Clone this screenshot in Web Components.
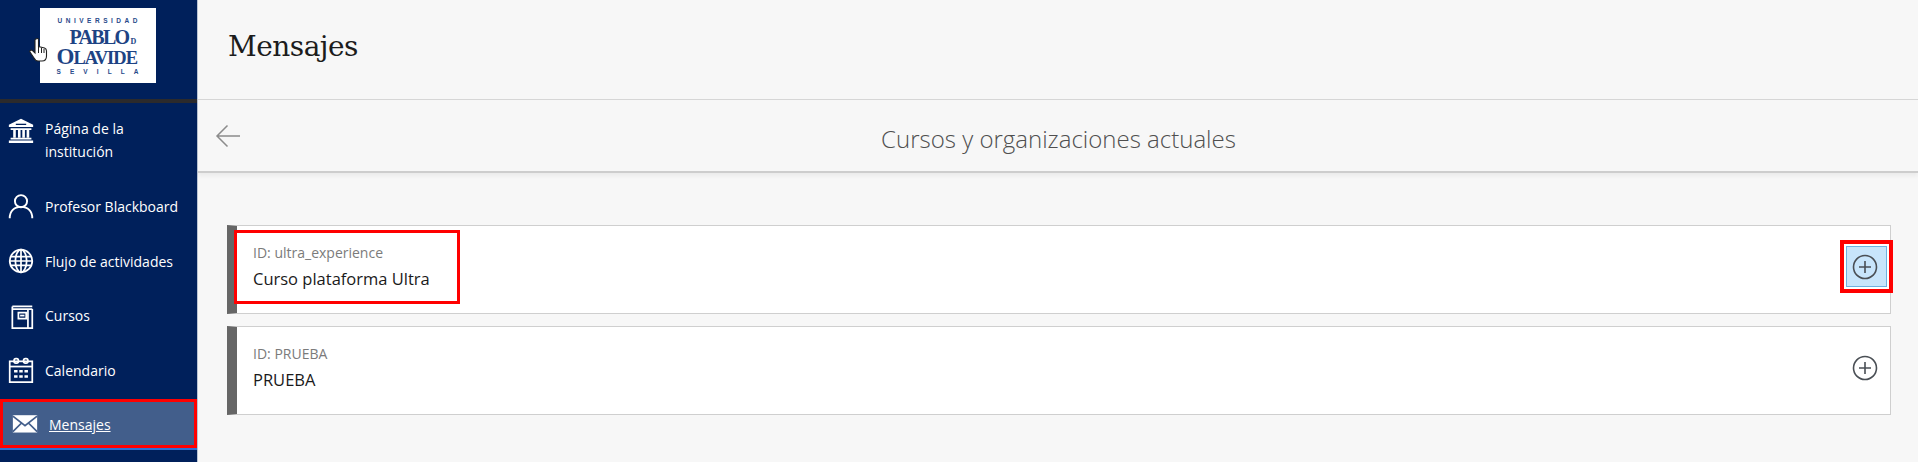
<!DOCTYPE html>
<html lang="es">
<head>
<meta charset="utf-8">
<title>Mensajes</title>
<style>
  html, body { margin: 0; height: 100%; background: #f7f7f7; overflow: hidden; }
  body { font-family: "Open Sans", sans-serif; }
  app-shell { width: 1918px; height: 462px; }
</style>
</head>
<body>
<app-shell>
  <side-nav slot="nav">
    <nav-item icon="bank">Página de la institución</nav-item>
    <nav-item icon="user">Profesor Blackboard</nav-item>
    <nav-item icon="globe">Flujo de actividades</nav-item>
    <nav-item icon="book">Cursos</nav-item>
    <nav-item icon="calendar">Calendario</nav-item>
    <nav-item icon="mail" active>Mensajes</nav-item>
  </side-nav>
  <page-header>Mensajes</page-header>
  <sub-header>Cursos y organizaciones actuales</sub-header>
  <course-list>
    <course-card course-id="ultra_experience" highlighted>Curso plataforma Ultra</course-card>
    <course-card course-id="PRUEBA">PRUEBA</course-card>
  </course-list>
</app-shell>

<script>
const NAV_ICONS = {
  bank: `<path d="M1 9 15 2l14 7v2.500H1z" fill="currentColor"/><path d="M3 13h24v2H3zM3 24h24v2H3zM1 27h28v3H1z" fill="currentColor"/><path d="M6 15h3v9H6zM11.500 15h3v9h-3zM16.500 15h3v9h-3zM21.500 15h3v9h-3z" fill="currentColor"/><path d="M9 8.500h12" stroke="#00205b" stroke-width="1.500"/>`,
  user: `<circle cx="15" cy="9.500" r="7" fill="none" stroke="currentColor" stroke-width="2.200"/><path d="M2 29c0-8 5-13 13-13s13 5 13 13" fill="none" stroke="currentColor" stroke-width="2.200"/>`,
  globe: `<g fill="none" stroke="currentColor" stroke-width="2"><circle cx="15" cy="15" r="13"/><ellipse cx="15" cy="15" rx="6.500" ry="13"/><path d="M15 2v26M3 10h24M2 15h26M3 20h24"/></g>`,
  book: `<g fill="none" stroke="currentColor" stroke-width="2"><path d="M5 4h23M5 4v25h18V7M5 7h23M28 7v22h-5"/><path d="M12 11h9v7h-9z"/></g><path d="M14 13.500h5v2h-5z" fill="currentColor"/>`,
  calendar: `<g fill="none" stroke="currentColor" stroke-width="2"><rect x="2" y="5" width="26" height="24"/><rect x="7" y="2" width="5" height="5" rx="2"/><rect x="18" y="2" width="5" height="5" rx="2"/><path d="M2 11h26"/></g><path d="M7 15h4v3H7zM13 15h4v3h-4zM19 15h4v3h-4zM7 21h4v3H7zM13 21h4v3h-4zM19 21h4v3h-4z" fill="currentColor"/>`,
  mail: `<rect x="1" y="6" width="28" height="20" fill="currentColor"/><path d="M1 7l14 11L29 7M1 25l10-10M29 25 19 15" fill="none" stroke="#425e8b" stroke-width="2"/>`
};

class AppShell extends HTMLElement {
  constructor() {
    super();
    this.attachShadow({ mode: "open" });
    this.shadowRoot.innerHTML = `
      <style>
        :host { display: flex; }
        .main { flex: 1; min-width: 0; display: flex; flex-direction: column; }
      </style>
      <slot name="nav"></slot>
      <div class="main"><slot></slot></div>`;
  }
}

class SideNav extends HTMLElement {
  constructor() {
    super();
    this.attachShadow({ mode: "open" });
    this.shadowRoot.innerHTML = `
      <style>
        :host {
          display: flex;
          flex-direction: column;
          width: 197px;
          height: 462px;
          background: #00205b;
          border-right: 1px solid #b9c4d4;
          position: relative;
        }
        .brand {
          flex: none;
          height: 91px;
          display: flex;
          justify-content: center;
          padding: 8px 2px 0 0;
          border-bottom: 4px solid #2b2a2c;
        }
        .logo {
          width: 116px;
          height: 75px;
          background: #fff;
          color: #1d4384;
          display: flex;
          flex-direction: column;
          align-items: center;
          font-family: "Liberation Serif", serif;
        }
        .spaced {
          font: 700 6.500px/7px "Liberation Sans", sans-serif;
          letter-spacing: 3.500px;
          margin-right: -3.500px;
          margin-top: 8.500px;
          color: #28498a;
        }
        .spaced.s { letter-spacing: 9.100px; margin-right: -9.100px; margin-top: 1.500px; }
        .words { font-weight: 700; margin-top: 4.500px; width: 82px; }
        .words div { height: 19px; line-height: 19px; white-space: nowrap; }
        .pablo { font-size: 20px; letter-spacing: -1.700px; padding-left: 13px; }
        .pablo small { font-size: 8px; letter-spacing: 0; margin-left: 2px; }
        .olavide { font-size: 18.500px; letter-spacing: -1px; }
        .olavide b { font-size: 23px; }
        .hand { position: absolute; left: 29px; top: 37px; }
        .items { display: flex; flex-direction: column; padding-top: 7px; }
      </style>
      <div class="brand">
        <div class="logo">
          <div class="spaced">UNIVERSIDAD</div>
          <div class="words">
            <div class="pablo">PABLO<small>D</small></div>
            <div class="olavide"><b>O</b>LAVIDE</div>
          </div>
          <div class="spaced s">SEVILLA</div>
        </div>
      </div>
      <svg class="hand" width="20" height="26" viewBox="0 0 20 26">
        <path d="M7 2c1-1 2.500-.5 2.500 1v6.500l6 1.500c1.500.5 2 1.500 2 3v5c0 3-1.500 5-4.500 5H9c-2 0-3-1-4-3L1 15c-.5-1.500 1-2.500 2.500-1.500L6 16V3c0-.5.500-1 1-1z" fill="#fff" stroke="#222" stroke-width="1.100"/>
        <path d="M9.500 10v6M12.500 11v5M15 12v4" stroke="#222" stroke-width="1"/>
      </svg>
      <div class="items"><slot></slot></div>`;
  }
}

class NavItem extends HTMLElement {
  constructor() {
    super();
    this.attachShadow({ mode: "open" });
  }

  connectedCallback() {
    const icon = NAV_ICONS[this.getAttribute("icon")] || "";
    this.shadowRoot.innerHTML = `
      <style>
        :host {
          display: flex;
          align-items: center;
          gap: 11px;
          box-sizing: border-box;
          min-height: 54.700px;
          padding: 0 8px 0 8px;
          color: #fff;
          font: 14px/23px "Open Sans", sans-serif;
        }
        :host([icon="bank"]) {
          align-items: flex-start;
          min-height: 69px;
          padding-top: 6.500px;
        }
        :host([active]) {
          min-height: 49px;
          margin-top: 1px;
          padding-left: 9px;
          background: #425e8b;
          border: 3px solid #f00;
          box-shadow: 0 2px 0 #2f6fd0;
          text-decoration: underline;
        }
        :host([active]) span { padding-top: 3px; }
        svg { flex: none; }
      </style>
      <svg width="26" height="26" viewBox="0 0 30 30">${icon}</svg>
      <span><slot></slot></span>`;
  }
}

class PageHeader extends HTMLElement {
  constructor() {
    super();
    this.attachShadow({ mode: "open" });
    this.shadowRoot.innerHTML = `
      <style>
        :host {
          display: flex;
          align-items: center;
          box-sizing: border-box;
          height: 100px;
          padding: 0 0 7px 30px;
          border-bottom: 1px solid #d6d6d6;
          color: #1c1c1c;
          font: 28px "DejaVu Serif", serif;
          letter-spacing: -0.500px;
        }
      </style>
      <slot></slot>`;
  }
}

class SubHeader extends HTMLElement {
  constructor() {
    super();
    this.attachShadow({ mode: "open" });
    this.shadowRoot.innerHTML = `
      <style>
        :host {
          display: flex;
          align-items: center;
          position: relative;
          box-sizing: border-box;
          height: 73px;
          border-bottom: 2px solid #cdcdcd;
          box-shadow: 0 3px 4px rgba(0,0,0,.05);
          color: #4f4f4f;
          font: 300 24px "Open Sans", sans-serif;
        }
        .back { flex: none; margin-left: 17px; }
        .title { flex: 1; text-align: center; padding: 5px 41px 0 0; }
      </style>
      <svg class="back" width="25" height="24" viewBox="0 0 25 24">
        <path d="M12.500 1.500 2 12l10.500 10.500M2 12h23" fill="none" stroke="#8c8c8c" stroke-width="1.500"/>
      </svg>
      <div class="title"><slot></slot></div>`;
  }
}

class CourseList extends HTMLElement {
  constructor() {
    super();
    this.attachShadow({ mode: "open" });
    this.shadowRoot.innerHTML = `
      <style>
        :host {
          display: flex;
          flex-direction: column;
          gap: 12px;
          padding: 52px 27px 0 29px;
        }
      </style>
      <slot></slot>`;
  }
}

class CourseCard extends HTMLElement {
  constructor() {
    super();
    this.attachShadow({ mode: "open" });
  }

  connectedCallback() {
    const id = this.getAttribute("course-id");
    this.shadowRoot.innerHTML = `
      <style>
        :host {
          display: flex;
          align-items: center;
          justify-content: space-between;
          box-sizing: border-box;
          height: 89px;
          background: #fff;
          border: 1px solid #cfcfcf;
          border-left: 10px solid #666;
          padding: 0 0 6px 16px;
        }
        .text { display: flex; flex-direction: column; gap: 3px; }
        .id { color: #7b7b7b; font: 14px/21px "Open Sans", sans-serif; }
        .name { color: #1a1a1a; font: 500 16.500px/26px "Open Sans", sans-serif; }
        .plus {
          flex: none;
          display: flex;
          align-items: center;
          justify-content: center;
          width: 41px;
          height: 41px;
          box-sizing: border-box;
          margin-right: 3px;
          padding-right: 3px;
        }
        :host([highlighted]) .plus {
          background: #c8e5fb;
          border: 1px solid #6db1e0;
          outline: 4px solid #f00;
          outline-offset: 2px;
        }
        :host([highlighted]) .text {
          box-sizing: border-box;
          width: 220px;
          margin-left: -16px;
          padding: 9px 0 9px 16px;
          outline: 3px solid #f00;
        }
        svg { display: block; }
      </style>
      <div class="text">
        <div class="id">ID: ${id}</div>
        <div class="name"><slot></slot></div>
      </div>
      <div class="plus">
        <svg width="26" height="26" viewBox="0 0 26 26">
          <circle cx="13" cy="13" r="11.500" fill="none" stroke="#4a4f55" stroke-width="1.600"/>
          <path d="M13 7v12M7 13h12" stroke="#4a4f55" stroke-width="1.600"/>
        </svg>
      </div>`;
  }
}

customElements.define("app-shell", AppShell);
customElements.define("side-nav", SideNav);
customElements.define("nav-item", NavItem);
customElements.define("page-header", PageHeader);
customElements.define("sub-header", SubHeader);
customElements.define("course-list", CourseList);
customElements.define("course-card", CourseCard);
</script>
</body>
</html>
